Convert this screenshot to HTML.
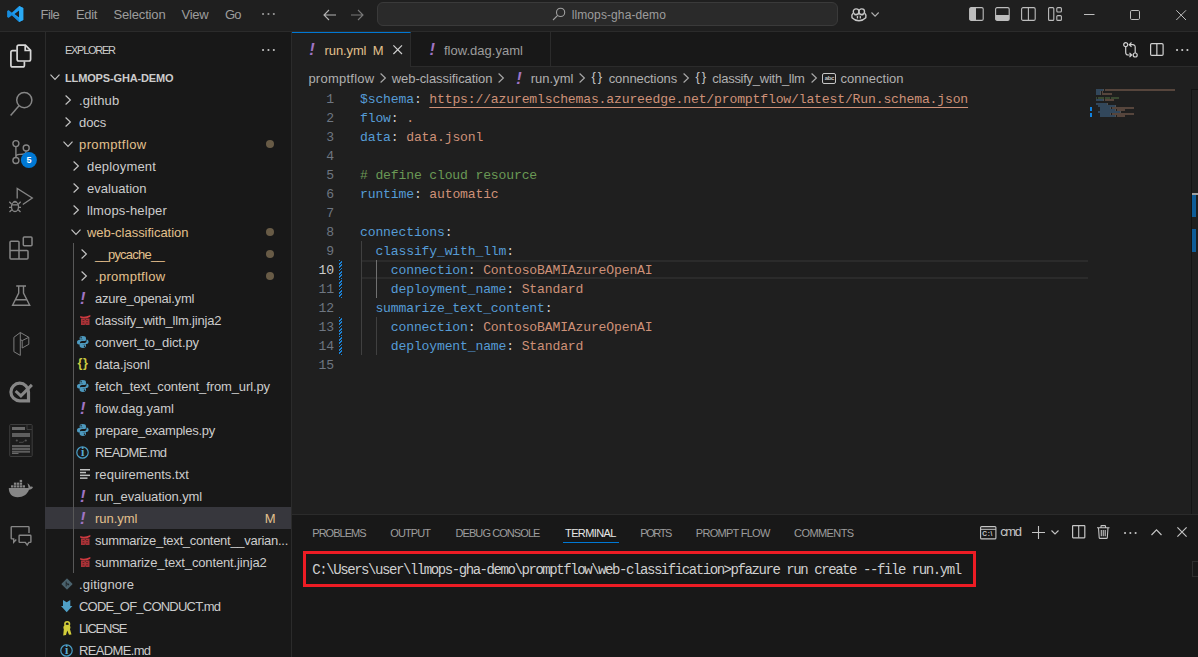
<!DOCTYPE html>
<html lang="en">
<head>
<meta charset="utf-8">
<title>run.yml - llmops-gha-demo - Visual Studio Code</title>
<style>
*{box-sizing:border-box;margin:0;padding:0}
html,body{width:1198px;height:657px;overflow:hidden;background:#181818}
body{font-family:"Liberation Sans",sans-serif;font-size:13px;color:#ccc;position:relative}
.abs{position:absolute}
svg{display:block;overflow:visible;position:absolute}
span{white-space:pre}
#title{left:0;top:0;width:1198px;height:32px;background:#1f1f1f;border-bottom:1px solid #2b2b2b}
#title span{position:absolute;top:0;height:31px;line-height:30px;color:#9d9d9d}
#cc{left:377px;top:2px;width:461px;height:24px;border:1px solid #3a3a3a;border-radius:6px;background:#2a2a2a}
#act{left:0;top:32px;width:46px;height:625px;background:#181818;border-right:1px solid #2b2b2b}
#side{left:46px;top:32px;width:246px;height:625px;background:#181818;border-right:1px solid #2b2b2b}
.row{position:absolute;left:0;width:245px;height:22px}
.row span{position:absolute;top:0;height:22px;line-height:23px}
.row.sel{background:#37373d;left:-1px;width:246px}.row.sel span{margin-left:1px}
.dot{position:absolute;left:219.5px;top:7px;width:8px;height:8px;border-radius:50%;background:#e2c08d;opacity:.4}
#tabs{left:292px;top:32px;width:906px;height:35px;background:#181818;border-bottom:1px solid #2b2b2b}
.tab{position:absolute;top:0;height:35px;border-right:1px solid #2b2b2b}
.tab span{position:absolute;top:0;height:35px;line-height:37px}
#crumbs{left:292px;top:67px;width:906px;height:22px;background:#1f1f1f}
#crumbs span{position:absolute;top:0;height:22px;line-height:23px;color:#b0b0b0}
#editor{left:292px;top:89px;width:906px;height:425px;background:#1f1f1f;overflow:hidden}
.ln{position:absolute;left:0;width:42px;height:19px;line-height:21px;text-align:right;font-family:"Liberation Mono",monospace;font-size:13.1px;letter-spacing:-.161px;color:#6e7681}
.cl{position:absolute;left:68px;height:19px;line-height:21px;font-family:"Liberation Mono",monospace;font-size:13.1px;letter-spacing:-.161px;color:#ccc}
.k{color:#569cd6}.s{color:#ce9178}.c{color:#6a9955}.u{text-decoration:underline;text-underline-offset:3.5px;text-decoration-thickness:1px}
.ig{position:absolute;width:1px;background:#404040}
.dg{position:absolute;left:47px;width:3px;height:19px;background:repeating-linear-gradient(135deg,#1b81d4 0 1.2px,#1f1f1f 1.2px 2.4px)}
#panel{left:292px;top:514px;width:906px;height:143px;background:#181818;border-top:1px solid #2b2b2b}
#panel span{position:absolute}
.pt{top:8px;height:22px;line-height:21px;font-size:11px;color:#9d9d9d}
</style>
</head>
<body>
<div id="title" class="abs"><svg style="left:7px;top:6px" width="16.5" height="16" viewBox="0 0 16 16" ><path d="M11.9 0.1 L16 2 V14 L11.9 15.9 L4.6 9.3 L1.4 11.8 L0 11.1 V4.9 L1.4 4.2 L4.6 6.7 Z M11.9 4.4 L7.2 8 L11.9 11.6 Z" fill="#1f9cf0" fill-rule="evenodd"/><path d="M11.9 0.1 L16 2 V14 L11.9 15.9 Z" fill="#2aaaf5"/><path d="M0 4.9 L1.4 4.2 L11.9 13.2 V15.9 L4.6 9.3 L1.4 11.8 L0 11.1 Z" fill="#0f7fd0" opacity=".55"/></svg><span style="left:40.6px;letter-spacing:-0.563px;">File</span><span style="left:75.9px;letter-spacing:-0.327px;">Edit</span><span style="left:113.4px;letter-spacing:-0.154px;">Selection</span><span style="left:181.5px;letter-spacing:-0.238px;">View</span><span style="left:225.0px;letter-spacing:-0.772px;">Go</span><svg style="left:261.85px;top:13.45px" width="12.9" height="2.1" viewBox="0 0 12.9 2.1" ><circle cx="1.05" cy="1.05" r="1.05" fill="#9d9d9d"/><circle cx="6.45" cy="1.05" r="1.05" fill="#9d9d9d"/><circle cx="11.850000000000001" cy="1.05" r="1.05" fill="#9d9d9d"/></svg><svg style="left:323px;top:9px" width="14" height="12" viewBox="0 0 14 12" ><path d="M13 6H1.2M6 1L1 6l5 5" fill="none" stroke="#b4b4b4" stroke-width="1.1"/></svg><svg style="left:349.5px;top:9px" width="14" height="12" viewBox="0 0 14 12" ><path d="M1 6h11.8M8 1l5 5-5 5" fill="none" stroke="#7a7a7a" stroke-width="1.1"/></svg><div id="cc" class="abs"></div><svg style="left:552px;top:7px" width="14" height="14" viewBox="0 0 14 14" ><circle cx="8.6" cy="5.4" r="4.1" fill="none" stroke="#a0a0a0" stroke-width="1.1"/><path d="M5.7 8.3L1 13" stroke="#a0a0a0" stroke-width="1.1"/></svg><span style="left:571.7px;font-size:12px;letter-spacing:0.105px;line-height:31px;">llmops-gha-demo</span><svg style="left:850.5px;top:8px" width="16" height="14" viewBox="0 0 16 14" ><rect x="2.300" y=".9" width="5.600" height="5.600" rx="2.700" fill="none" stroke="#c8c8c8" stroke-width="1.4"/><rect x="7.900" y=".9" width="5.600" height="5.600" rx="2.700" fill="none" stroke="#c8c8c8" stroke-width="1.4"/><path d="M2 5.300Q.3 6.800 1 9.700Q4 12.700 7.900 12.700Q11.800 12.700 14.800 9.700Q15.500 6.800 13.800 5.300" fill="none" stroke="#c8c8c8" stroke-width="1.4"/><rect x="5.800" y="8" width="1.300" height="2.400" rx=".5" fill="#c8c8c8"/><rect x="8.700" y="8" width="1.300" height="2.400" rx=".5" fill="#c8c8c8"/><path d="M3.500 7.200Q7.900 6.200 12.300 7.200" fill="none" stroke="#c8c8c8" stroke-width=".9" opacity=".7"/></svg><svg style="left:870.8px;top:11.7px" width="9" height="5" viewBox="0 0 9 5" ><path d="M.5.5L4.100 4.100L7.700.5" fill="none" stroke="#b0b0b0" stroke-width="1.1"/></svg><svg style="left:969px;top:7px" width="15" height="14" viewBox="0 0 15 14" ><rect x=".6" y=".6" width="13.6" height="12.8" rx="1.5" fill="none" stroke="#bdbdbd" stroke-width="1.1"/><path d="M1 1h6v12H1z" fill="#bdbdbd"/></svg><svg style="left:995px;top:7px" width="15" height="14" viewBox="0 0 15 14" ><rect x=".6" y=".6" width="13.6" height="12.8" rx="1.5" fill="none" stroke="#bdbdbd" stroke-width="1.1"/><path d="M1 8h13v5H1z" fill="#bdbdbd"/></svg><svg style="left:1021px;top:7px" width="15" height="14" viewBox="0 0 15 14" ><rect x=".6" y=".6" width="13.6" height="12.8" rx="1.5" fill="none" stroke="#bdbdbd" stroke-width="1.1"/><path d="M7.400 1v12" stroke="#bdbdbd" stroke-width="1.1"/></svg><svg style="left:1047.5px;top:7px" width="14" height="14" viewBox="0 0 14 14" ><rect x=".6" y=".6" width="5.200" height="12.800" rx="1" fill="none" stroke="#bdbdbd" stroke-width="1.1"/><rect x="8.800" y=".6" width="4.600" height="4.400" rx="1" fill="none" stroke="#bdbdbd" stroke-width="1.1"/><rect x="8.800" y="8.600" width="4.600" height="4.800" rx="1" fill="none" stroke="#bdbdbd" stroke-width="1.1"/></svg><svg style="left:1083.5px;top:14px" width="11" height="1" viewBox="0 0 11 1" ><rect width="10.5" height="1" fill="#bdbdbd"/></svg><svg style="left:1130px;top:9.5px" width="10" height="10" viewBox="0 0 10 10" ><rect x=".5" y=".5" width="9" height="9" rx="1.2" fill="none" stroke="#bdbdbd" stroke-width="1"/></svg><svg style="left:1176px;top:9.5px" width="10" height="10" viewBox="0 0 10 10" ><path d="M.3.3l9.700 9.700M10 .3L.3 10" stroke="#bdbdbd" stroke-width="1"/></svg></div>
<div id="act" class="abs"><svg style="left:0;top:0" width="46" height="625" viewBox="0 32 46 625"><g fill="none" stroke="#d7d7d7" stroke-width="1.7"><path d="M16.6 50.600H12.600Q10.900 50.600 10.900 52.300V65.200Q10.900 66.900 12.600 66.900H22.700Q24.400 66.900 24.400 65.200V61.600"/><path d="M18.800 45.100H25.400L30.600 50.300V59.300Q30.600 61 28.900 61H18.800Q17.100 61 17.100 59.300V46.800Q17.100 45.100 18.800 45.100Z"/><path d="M25.200 45.300V50.500H30.400"/></g><g fill="none" stroke="#868686" stroke-width="1.5"><circle cx="24.3" cy="100.1" r="7.6"/><path d="M19 105.800L10.600 115.500"/></g><g fill="none" stroke="#868686" stroke-width="1.4"><circle cx="15.9" cy="143.6" r="3"/><circle cx="26.2" cy="148" r="3"/><circle cx="15.9" cy="160.5" r="3"/><path d="M15.900 146.700V157.400M26.200 151.100C26.200 154.600 23 154.400 19.500 154.400 17.200 154.400 15.900 155.400 15.900 157.400"/></g><circle cx="28.9" cy="160" r="8" fill="#0078d4"/><g fill="none" stroke="#868686" stroke-width="1.3"><path d="M17.200 198.500V188.500L32.300 198L22.800 204.500"/><ellipse cx="15" cy="206.700" rx="3.500" ry="4.800"/><path d="M11.700 204.800H18.300M11.500 204L9.300 201.800M18.500 204L20.700 201.800M11.400 207.300H9M18.600 207.300H21M11.800 209.800L9.500 212M18.200 209.800L20.500 212M13.500 202.300Q15 200.300 16.500 202.300"/></g><g fill="none" stroke="#868686" stroke-width="1.5"><path d="M11 241.200H18Q19 241.200 19 242.200V250.500H27Q28 250.500 28 251.500V258Q28 259 27 259H11Q10 259 10 258V242.200Q10 241.200 11 241.200ZM19 250.500V259M10 250.500H19"/><rect x="23.300" y="237" width="8.700" height="8.700" rx="1"/></g><g fill="none" stroke="#868686" stroke-width="1.4"><path d="M16.200 286H26M18.700 286V293L12.600 305.300H29.700L23.500 293V286M15.400 299.800H26.800"/></g><g fill="none" stroke="#7d7d7d" stroke-width="1"><path d="M20.300 332.500L13.900 337.300V351.700L20.300 355.400ZM20.300 332.500L28.800 337.300V344.300L22.200 348V340.600L28.800 337.300M22.200 340.600L20.300 339.600"/></g><g fill="none" stroke="#868686" stroke-width="3.2"><path d="M28.500 392A8.800 8.800 0 1 0 19.700 400.800H28.500Z"/></g><g fill="none" stroke="#868686" stroke-width="3"><path d="M15.600 391L20.900 395.900L31.900 384.900"/></g><rect x="9.700" y="424.500" width="22.500" height="32" rx="1" fill="#1c1c1c" stroke="#3d3d3d" stroke-width="1"/><path d="M27 424.500V429.500H32" fill="none" stroke="#3d3d3d"/><rect x="12" y="427" width="13" height="3" fill="#6a6a6a"/><rect x="12" y="433" width="18" height="4" fill="#5e5e5e"/><rect x="12" y="445" width="18" height="2.300" fill="#5e5e5e"/><rect x="12" y="448" width="18" height="2" fill="#5e5e5e"/><rect x="12" y="450.700" width="18" height="2" fill="#5e5e5e"/><rect x="12" y="453" width="6.500" height="1" fill="#6a6a6a"/><circle cx="16.800" cy="440.500" r="1.100" fill="#555"/><circle cx="25.800" cy="440.500" r="1.100" fill="#555"/><path d="M19 442.300H23L24.500 441" fill="none" stroke="#555" stroke-width=".8"/><path d="M8.800 488H28.500C28.300 486 28 484.500 27.300 483.200C29.300 484.300 30 485.600 30.300 486.700C31.300 486.200 32.300 486.400 33 487C32.300 488.800 30.800 489.700 29 489.700C27.300 494.300 23.300 497.200 17.600 497.200C11.800 497.200 8.800 493.500 8.800 488Z" fill="#868686"/><rect x="11" y="485.3" width="2.4" height="2.200" fill="#868686"/><rect x="13.9" y="485.3" width="2.4" height="2.200" fill="#868686"/><rect x="16.8" y="485.3" width="2.4" height="2.200" fill="#868686"/><rect x="19.7" y="485.3" width="2.4" height="2.200" fill="#868686"/><rect x="22.6" y="485.3" width="2.4" height="2.200" fill="#868686"/><rect x="13.9" y="482.6" width="2.4" height="2.200" fill="#868686"/><rect x="16.8" y="482.6" width="2.4" height="2.200" fill="#868686"/><rect x="19.7" y="482.6" width="2.4" height="2.200" fill="#868686"/><rect x="19.7" y="479.9" width="2.4" height="2.200" fill="#868686"/><g fill="none" stroke="#868686" stroke-width="1.4"><path d="M29 533V527.300Q29 526.600 28.300 526.600H11.900Q11.200 526.600 11.200 527.300V538.200Q11.200 538.900 11.900 538.900H13.700V542.200L16.300 539.500"/><path d="M19.800 535.300H30.200Q30.900 535.300 30.900 536V541.700Q30.900 542.400 30.200 542.400H28.900L27.200 545L25.300 542.400H19.800Q19.100 542.400 19.100 541.700V536Q19.100 535.300 19.800 535.300Z"/></g></svg><span style="left:26.4px;font-size:9px;font-weight:700;color:#fff;position:absolute;top:122.5px;line-height:11px;">5</span></div>
<div id="side" class="abs"><div class="row" style="top:6px"><span style="left:19.0px;font-size:11px;letter-spacing:-1.278px;line-height:24px;">EXPLORER</span></div><svg style="left:215.85px;top:16.95px" width="12.9" height="2.1" viewBox="0 0 12.9 2.1" ><circle cx="1.05" cy="1.05" r="1.05" fill="#c5c5c5"/><circle cx="6.45" cy="1.05" r="1.05" fill="#c5c5c5"/><circle cx="11.850000000000001" cy="1.05" r="1.05" fill="#c5c5c5"/></svg><div class="row" style="top:35px"><svg style="left:4.299999999999997px;top:7.4px" width="10" height="6" viewBox="0 0 10 6" ><path d="M.5.6L5 5.400L9.500.6" fill="none" stroke="#c5c5c5" stroke-width="1.15"/></svg><span style="left:19.0px;font-size:11px;font-weight:700;letter-spacing:-0.141px;line-height:23px;">LLMOPS-GHA-DEMO</span></div><div class="row" style="top:57px"><svg style="left:19.299999999999997px;top:6px" width="6" height="10" viewBox="0 0 6 10" ><path d="M.6.5L5.400 5L.6 9.500" fill="none" stroke="#c5c5c5" stroke-width="1.15"/></svg><span style="left:33.0px;letter-spacing:0.208px;">.github</span></div><div class="row" style="top:79px"><svg style="left:19.299999999999997px;top:6px" width="6" height="10" viewBox="0 0 6 10" ><path d="M.6.5L5.400 5L.6 9.500" fill="none" stroke="#c5c5c5" stroke-width="1.15"/></svg><span style="left:33.0px;letter-spacing:-0.092px;">docs</span></div><div class="row" style="top:101px"><svg style="left:17.200000000000003px;top:8.3px" width="10" height="6" viewBox="0 0 10 6" ><path d="M.5.6L5 5.400L9.500.6" fill="none" stroke="#c5c5c5" stroke-width="1.15"/></svg><span style="left:33.0px;color:#e2c08d;letter-spacing:0.402px;">promptflow</span><i class="dot"></i></div><div class="row" style="top:123px"><svg style="left:27.299999999999997px;top:6px" width="6" height="10" viewBox="0 0 6 10" ><path d="M.6.5L5.400 5L.6 9.500" fill="none" stroke="#c5c5c5" stroke-width="1.15"/></svg><span style="left:41.0px;letter-spacing:0.178px;">deployment</span></div><div class="row" style="top:145px"><svg style="left:27.299999999999997px;top:6px" width="6" height="10" viewBox="0 0 6 10" ><path d="M.6.5L5.400 5L.6 9.500" fill="none" stroke="#c5c5c5" stroke-width="1.15"/></svg><span style="left:41.0px;letter-spacing:0.032px;">evaluation</span></div><div class="row" style="top:167px"><svg style="left:27.299999999999997px;top:6px" width="6" height="10" viewBox="0 0 6 10" ><path d="M.6.5L5.400 5L.6 9.500" fill="none" stroke="#c5c5c5" stroke-width="1.15"/></svg><span style="left:41.0px;letter-spacing:0.150px;">llmops-helper</span></div><div class="row" style="top:189px"><svg style="left:25.200000000000003px;top:8.3px" width="10" height="6" viewBox="0 0 10 6" ><path d="M.5.6L5 5.400L9.500.6" fill="none" stroke="#c5c5c5" stroke-width="1.15"/></svg><span style="left:41.0px;color:#e2c08d;letter-spacing:-0.021px;">web-classification</span><i class="dot"></i></div><div class="row" style="top:211px"><svg style="left:35.3px;top:6px" width="6" height="10" viewBox="0 0 6 10" ><path d="M.6.5L5.400 5L.6 9.500" fill="none" stroke="#c5c5c5" stroke-width="1.15"/></svg><span style="left:49.0px;color:#e2c08d;letter-spacing:-0.768px;">__pycache__</span><i class="dot"></i></div><div class="row" style="top:233px"><svg style="left:35.3px;top:6px" width="6" height="10" viewBox="0 0 6 10" ><path d="M.6.5L5.400 5L.6 9.500" fill="none" stroke="#c5c5c5" stroke-width="1.15"/></svg><span style="left:49.0px;color:#e2c08d;letter-spacing:0.291px;">.promptflow</span><i class="dot"></i></div><div class="row" style="top:255px"><span style="left:33.9px;font-size:16.5px;font-weight:700;font-style:italic;color:#a074c4;line-height:23px;">!</span><span style="left:49.0px;letter-spacing:-0.214px;">azure_openai.yml</span></div><div class="row" style="top:277px"><svg style="left:34px;top:6px" width="10.6" height="10" viewBox="0 0 10.6 10" ><path d="M.2 1.100Q4.800 2.700 10.400 0L10.300 1.700Q7 3.600 5.200 3.500Q2.500 3.500 .2 2.800Z" fill="#d03a40"/><rect x="1" y="3.500" width="8.500" height="6.500" fill="#d03a40" opacity=".8"/><path d="M2.600 5.300H4.300V6H2.600ZM6.200 5.300H7.900V6H6.200ZM2.600 7.500H4.300V8.200H2.600ZM6.200 7.500H7.900V8.200H6.200ZM4.900 3.500H5.600V5H4.900ZM4.900 8.800H5.600V10H4.900Z" fill="#181818" opacity=".7"/></svg><span style="left:49.0px;letter-spacing:-0.187px;">classify_with_llm.jinja2</span></div><div class="row" style="top:299px"><svg style="left:31px;top:4.9px" width="11.6" height="12" viewBox="0 0 11.6 12" ><path d="M5.700 0C3.600 0 2.600.9 2.600 2.200V3.700H5.900V4.100H1.900C.7 4.100 0 5.100 0 6.300 0 7.600.7 8.600 1.900 8.600H3V6.900C3 5.800 3.900 5.100 5 5.100H7.400C8.400 5.100 9 4.400 9 3.500V2.200C9 .9 8 0 5.700 0ZM4.100 1A.7.7 0 1 1 4.100 2.400A.7.7 0 1 1 4.100 1Z" fill="#4d99be" fill-rule="evenodd"/><path d="M5.900 12C8 12 9 11.100 9 9.800V8.300H5.700V7.900H9.700C10.900 7.900 11.600 6.900 11.600 5.700 11.600 4.400 10.900 3.400 9.700 3.400H9.500V5.100C9.500 6.200 8.700 6.900 7.600 6.900H4.200C3.200 6.900 2.600 7.600 2.600 8.500V9.800C2.600 11.100 3.600 12 5.900 12ZM7.500 11A.7.7 0 1 1 7.500 9.600A.7.7 0 1 1 7.500 11Z" fill="#4d99be" fill-rule="evenodd"/></svg><span style="left:49.0px;letter-spacing:-0.084px;">convert_to_dict.py</span></div><div class="row" style="top:321px"><span style="left:31.4px;font-size:12.5px;font-weight:700;color:#cbcb41;letter-spacing:0.783px;line-height:21px;">{}</span><span style="left:49.0px;letter-spacing:-0.096px;">data.jsonl</span></div><div class="row" style="top:343px"><svg style="left:31px;top:4.9px" width="11.6" height="12" viewBox="0 0 11.6 12" ><path d="M5.700 0C3.600 0 2.600.9 2.600 2.200V3.700H5.900V4.100H1.900C.7 4.100 0 5.100 0 6.300 0 7.600.7 8.600 1.900 8.600H3V6.900C3 5.800 3.900 5.100 5 5.100H7.400C8.400 5.100 9 4.400 9 3.500V2.200C9 .9 8 0 5.700 0ZM4.100 1A.7.7 0 1 1 4.100 2.400A.7.7 0 1 1 4.100 1Z" fill="#4d99be" fill-rule="evenodd"/><path d="M5.900 12C8 12 9 11.100 9 9.800V8.300H5.700V7.900H9.700C10.900 7.900 11.600 6.900 11.600 5.700 11.600 4.400 10.900 3.400 9.700 3.400H9.500V5.100C9.500 6.200 8.700 6.900 7.600 6.900H4.200C3.200 6.900 2.600 7.600 2.600 8.500V9.800C2.600 11.100 3.600 12 5.900 12ZM7.500 11A.7.7 0 1 1 7.500 9.600A.7.7 0 1 1 7.500 11Z" fill="#4d99be" fill-rule="evenodd"/></svg><span style="left:49.0px;letter-spacing:-0.120px;">fetch_text_content_from_url.py</span></div><div class="row" style="top:365px"><span style="left:33.9px;font-size:16.5px;font-weight:700;font-style:italic;color:#a074c4;line-height:23px;">!</span><span style="left:49.0px;letter-spacing:0.010px;">flow.dag.yaml</span></div><div class="row" style="top:387px"><svg style="left:31px;top:4.9px" width="11.6" height="12" viewBox="0 0 11.6 12" ><path d="M5.700 0C3.600 0 2.600.9 2.600 2.200V3.700H5.900V4.100H1.900C.7 4.100 0 5.100 0 6.300 0 7.600.7 8.600 1.900 8.600H3V6.900C3 5.800 3.900 5.100 5 5.100H7.400C8.400 5.100 9 4.400 9 3.500V2.200C9 .9 8 0 5.700 0ZM4.100 1A.7.7 0 1 1 4.100 2.400A.7.7 0 1 1 4.100 1Z" fill="#4d99be" fill-rule="evenodd"/><path d="M5.900 12C8 12 9 11.100 9 9.800V8.300H5.700V7.900H9.700C10.900 7.900 11.600 6.900 11.600 5.700 11.600 4.400 10.900 3.400 9.700 3.400H9.500V5.100C9.500 6.200 8.700 6.900 7.600 6.900H4.200C3.200 6.900 2.600 7.600 2.600 8.500V9.800C2.600 11.100 3.600 12 5.900 12ZM7.500 11A.7.7 0 1 1 7.500 9.600A.7.7 0 1 1 7.500 11Z" fill="#4d99be" fill-rule="evenodd"/></svg><span style="left:49.0px;letter-spacing:-0.265px;">prepare_examples.py</span></div><div class="row" style="top:409px"><svg style="left:30.400000000000006px;top:4.5px" width="13" height="13" viewBox="0 0 13 13" ><circle cx="6.500" cy="6.500" r="5.700" fill="none" stroke="#4a9fc8" stroke-width="1.2"/></svg><span style="left:34.9px;font-size:12px;font-weight:700;font-family:'Liberation Serif',serif;color:#58abd4;top:4.5px;height:12px;line-height:12px;">i</span><span style="left:49.0px;letter-spacing:-0.655px;">README.md</span></div><div class="row" style="top:431px"><svg style="left:34px;top:6.3px" width="10" height="10" viewBox="0 0 10 10" ><rect x="0" y="0" width="10" height="1.500" fill="#bfc1c0"/><rect x="0" y="2.800" width="6" height="1.500" fill="#bfc1c0"/><rect x="0" y="5.600" width="10" height="1.500" fill="#bfc1c0"/><rect x="0" y="8.400" width="7.500" height="1.500" fill="#bfc1c0"/></svg><span style="left:49.0px;letter-spacing:0.044px;">requirements.txt</span></div><div class="row" style="top:453px"><span style="left:33.9px;font-size:16.5px;font-weight:700;font-style:italic;color:#a074c4;line-height:23px;">!</span><span style="left:49.0px;letter-spacing:-0.113px;">run_evaluation.yml</span></div><div class="row sel" style="top:475px"><span style="left:33.9px;font-size:16.5px;font-weight:700;font-style:italic;color:#a074c4;line-height:23px;">!</span><span style="left:49.0px;color:#e2c08d;letter-spacing:-0.032px;">run.yml</span><span style="left:218.7px;color:#e2c08d;letter-spacing:-0.444px;">M</span></div><div class="row" style="top:497px"><svg style="left:34px;top:6px" width="10.6" height="10" viewBox="0 0 10.6 10" ><path d="M.2 1.100Q4.800 2.700 10.400 0L10.300 1.700Q7 3.600 5.200 3.500Q2.500 3.500 .2 2.800Z" fill="#d03a40"/><rect x="1" y="3.500" width="8.500" height="6.500" fill="#d03a40" opacity=".8"/><path d="M2.600 5.300H4.300V6H2.600ZM6.200 5.300H7.900V6H6.200ZM2.600 7.500H4.300V8.200H2.600ZM6.200 7.500H7.900V8.200H6.200ZM4.900 3.500H5.600V5H4.900ZM4.900 8.800H5.600V10H4.900Z" fill="#181818" opacity=".7"/></svg><span style="left:49.0px;letter-spacing:-0.283px;">summarize_text_content__varian...</span></div><div class="row" style="top:519px"><svg style="left:34px;top:6px" width="10.6" height="10" viewBox="0 0 10.6 10" ><path d="M.2 1.100Q4.800 2.700 10.400 0L10.300 1.700Q7 3.600 5.200 3.500Q2.500 3.500 .2 2.800Z" fill="#d03a40"/><rect x="1" y="3.500" width="8.500" height="6.500" fill="#d03a40" opacity=".8"/><path d="M2.600 5.300H4.300V6H2.600ZM6.200 5.300H7.900V6H6.200ZM2.600 7.500H4.300V8.200H2.600ZM6.200 7.500H7.900V8.200H6.200ZM4.900 3.500H5.600V5H4.900ZM4.900 8.800H5.600V10H4.900Z" fill="#181818" opacity=".7"/></svg><span style="left:49.0px;letter-spacing:-0.138px;">summarize_text_content.jinja2</span></div><div class="row" style="top:541px"><svg style="left:14.700000000000003px;top:4.9px" width="12" height="12" viewBox="0 0 12 12" ><rect x="2" y="2" width="8" height="8" rx=".6" transform="rotate(45 6 6)" fill="#4a626d"/><path d="M5.200 3.600V8.400M5.200 5.300L7.400 6.500" stroke="#20282c" stroke-width="1" fill="none"/><circle cx="7.300" cy="6.400" r=".9" fill="#20282c"/></svg><span style="left:33.0px;letter-spacing:0.162px;">.gitignore</span></div><div class="row" style="top:563px"><svg style="left:15px;top:4.8px" width="11.4" height="12.3" viewBox="0 0 11.4 12.3" ><path d="M2 0L5.700 2.200L9.300 0V6H11.400L5.700 12.300L0 6H2Z" fill="#4f9fc6"/></svg><span style="left:33.0px;letter-spacing:-0.783px;">CODE_OF_CONDUCT.md</span></div><div class="row" style="top:585px"><svg style="left:16.799999999999997px;top:3.5px" width="8.6" height="14.6" viewBox="0 0 8.6 14.6" ><circle cx="4.200" cy="3.100" r="2.300" fill="none" stroke="#d2cd3a" stroke-width="1.600"/><ellipse cx="3.900" cy="6.400" rx="3.500" ry="2.600" fill="#d2cd3a"/><path d="M1 6.500L.2 14.400L3 14L4.300 9.500L6 13.800L8.500 13.500L6.500 6.500Z" fill="#d2cd3a"/></svg><span style="left:33.0px;letter-spacing:-1.220px;">LICENSE</span></div><div class="row" style="top:607px"><svg style="left:14.400000000000006px;top:4.5px" width="13" height="13" viewBox="0 0 13 13" ><circle cx="6.500" cy="6.500" r="5.700" fill="none" stroke="#4a9fc8" stroke-width="1.2"/></svg><span style="left:18.9px;font-size:12px;font-weight:700;font-family:'Liberation Serif',serif;color:#58abd4;top:4.5px;height:12px;line-height:12px;">i</span><span style="left:33.0px;letter-spacing:-0.655px;">README.md</span></div><div class="abs" style="left:27px;top:211px;width:1px;height:330px;background:#585858"></div></div>
<div id="tabs" class="abs"><div class="tab" style="left:0;width:119px;background:#1f1f1f;border-top:1px solid #0078d4;height:35px"><span style="left:17.3px;font-size:16.5px;font-weight:700;font-style:italic;color:#a074c4;top:-1px;line-height:35.5px;">!</span><span style="left:32.6px;color:#e2c08d;letter-spacing:-0.118px;top:-1px;">run.yml</span><span style="left:80.7px;color:#e2c08d;letter-spacing:-0.344px;top:-1px;">M</span><svg style="left:100.80000000000001px;top:12.299999999999997px" width="9.4" height="9.4" viewBox="0 0 9.4 9.4" ><path d="M.4.4l8.600 8.600M9 .4L.4 9" stroke="#d0d0d0" stroke-width="1.15"/></svg></div><div class="tab" style="left:119px;width:140px;height:34px"><span style="left:18.6px;font-size:16.5px;font-weight:700;font-style:italic;color:#a074c4;line-height:35.5px;">!</span><span style="left:33.0px;color:#9d9d9d;letter-spacing:0.010px;">flow.dag.yaml</span></div><svg style="left:830.5px;top:10.399999999999999px" width="15" height="16" viewBox="0 0 15 16" ><circle cx="2.700" cy="2.700" r="2" fill="none" stroke="#d0d0d0" stroke-width="1.2"/><circle cx="12.200" cy="13" r="2" fill="none" stroke="#d0d0d0" stroke-width="1.2"/><path d="M2.700 4.800V10.500Q2.700 13 5.200 13H8.500M6.500 10.800L8.700 13L6.500 15.200M12.200 11V5.200Q12.200 2.700 9.700 2.700H6.500M8.500 .5L6.300 2.700L8.500 4.900" fill="none" stroke="#d0d0d0" stroke-width="1.2"/></svg><svg style="left:857.7px;top:10.899999999999999px" width="14" height="13" viewBox="0 0 14 13" ><rect x=".6" y=".6" width="12.500" height="11.800" rx="1.200" fill="none" stroke="#d0d0d0" stroke-width="1.2"/><path d="M6.850 .6V12.400" stroke="#d0d0d0" stroke-width="1.2"/></svg><svg style="left:883.8499999999999px;top:16.749999999999996px" width="12.5" height="2.1" viewBox="0 0 12.5 2.1" ><circle cx="1.05" cy="1.05" r="1.05" fill="#d0d0d0"/><circle cx="6.25" cy="1.05" r="1.05" fill="#d0d0d0"/><circle cx="11.450000000000001" cy="1.05" r="1.05" fill="#d0d0d0"/></svg></div>
<div id="crumbs" class="abs"><span style="left:16.4px;letter-spacing:0.252px;">promptflow</span><svg style="left:88.30000000000001px;top:6.3px" width="6" height="10" viewBox="0 0 6 10" ><path d="M.6.5L5.400 5L.6 9.500" fill="none" stroke="#a9a9a9" stroke-width="1.15"/></svg><span style="left:99.8px;letter-spacing:-0.071px;">web-classification</span><svg style="left:206.3px;top:6.3px" width="6" height="10" viewBox="0 0 6 10" ><path d="M.6.5L5.400 5L.6 9.500" fill="none" stroke="#a9a9a9" stroke-width="1.15"/></svg><span style="left:224.2px;font-size:16.5px;font-weight:700;font-style:italic;color:#a074c4;">!</span><span style="left:238.8px;letter-spacing:-0.004px;">run.yml</span><svg style="left:286.5px;top:6.3px" width="6" height="10" viewBox="0 0 6 10" ><path d="M.6.5L5.400 5L.6 9.500" fill="none" stroke="#a9a9a9" stroke-width="1.15"/></svg><span style="left:299.5px;color:#c5c5c5;letter-spacing:1.956px;line-height:20px;">{}</span><span style="left:316.7px;letter-spacing:-0.090px;">connections</span><svg style="left:390.9px;top:6.3px" width="6" height="10" viewBox="0 0 6 10" ><path d="M.6.5L5.400 5L.6 9.500" fill="none" stroke="#a9a9a9" stroke-width="1.15"/></svg><span style="left:403.5px;color:#c5c5c5;letter-spacing:1.906px;line-height:20px;">{}</span><span style="left:420.3px;letter-spacing:-0.260px;">classify_with_llm</span><svg style="left:518.5px;top:6.3px" width="6" height="10" viewBox="0 0 6 10" ><path d="M.6.5L5.400 5L.6 9.500" fill="none" stroke="#a9a9a9" stroke-width="1.15"/></svg><svg style="left:530.2px;top:5.5px" width="14" height="11" viewBox="0 0 14 11" ><rect x=".5" y=".5" width="13" height="10" rx="1.500" fill="none" stroke="#c5c5c5" stroke-width="1"/></svg><span style="left:532.8px;font-size:6px;font-weight:700;color:#c5c5c5;letter-spacing:-0.381px;top:5.500px;height:11px;line-height:10px;">abc</span><span style="left:548.6px;letter-spacing:0.001px;">connection</span></div>
<div id="editor" class="abs"><div class="abs" style="left:69px;top:171px;width:727px;height:19px;border-top:2px solid #2b2b2b;border-bottom:2px solid #2b2b2b"></div><i class="ig" style="left:69px;top:152px;height:114px"></i><i class="ig" style="left:84px;top:171px;height:38px;background:#707070"></i><i class="ig" style="left:84px;top:228px;height:38px"></i><i class="dg" style="top:171px"></i><i class="dg" style="top:190px"></i><i class="dg" style="top:228px"></i><i class="dg" style="top:247px"></i><div class="ln" style="top:0px">1</div><div class="cl" style="top:0px;white-space:pre"><span class="k">$schema</span>: <span class="s u">https://azuremlschemas.azureedge.net/promptflow/latest/Run.schema.json</span></div><div class="ln" style="top:19px">2</div><div class="cl" style="top:19px;white-space:pre"><span class="k">flow</span>: <span class="s">.</span></div><div class="ln" style="top:38px">3</div><div class="cl" style="top:38px;white-space:pre"><span class="k">data</span>: <span class="s">data.jsonl</span></div><div class="ln" style="top:57px">4</div><div class="ln" style="top:76px">5</div><div class="cl" style="top:76px;white-space:pre"><span class="c"># define cloud resource</span></div><div class="ln" style="top:95px">6</div><div class="cl" style="top:95px;white-space:pre"><span class="k">runtime</span>: <span class="s">automatic</span></div><div class="ln" style="top:114px">7</div><div class="ln" style="top:133px">8</div><div class="cl" style="top:133px;white-space:pre"><span class="k">connections</span>:</div><div class="ln" style="top:152px">9</div><div class="cl" style="top:152px;white-space:pre">  <span class="k">classify_with_llm</span>:</div><div class="ln" style="top:171px;color:#ccc">10</div><div class="cl" style="top:171px;white-space:pre">    <span class="k">connection</span>: <span class="s">ContosoBAMIAzureOpenAI</span></div><div class="ln" style="top:190px">11</div><div class="cl" style="top:190px;white-space:pre">    <span class="k">deployment_name</span>: <span class="s">Standard</span></div><div class="ln" style="top:209px">12</div><div class="cl" style="top:209px;white-space:pre">  <span class="k">summarize_text_content</span>:</div><div class="ln" style="top:228px">13</div><div class="cl" style="top:228px;white-space:pre">    <span class="k">connection</span>: <span class="s">ContosoBAMIAzureOpenAI</span></div><div class="ln" style="top:247px">14</div><div class="cl" style="top:247px;white-space:pre">    <span class="k">deployment_name</span>: <span class="s">Standard</span></div><div class="ln" style="top:266px">15</div><svg style="left:804px;top:0px" width="80" height="32" viewBox="0 0 80 32" ><path d="M0 1h7" stroke="#5a94cc" stroke-width="1.500" stroke-dasharray=".75 .25" opacity=".62"/><path d="M7 1h1" stroke="#b0b0b0" stroke-width="1.500" stroke-dasharray=".75 .25" opacity=".62"/><path d="M9 1h70" stroke="#c08f76" stroke-width="1.500" stroke-dasharray=".75 .25" opacity=".62"/><path d="M0 3h4" stroke="#5a94cc" stroke-width="1.500" stroke-dasharray=".75 .25" opacity=".62"/><path d="M4 3h1" stroke="#b0b0b0" stroke-width="1.500" stroke-dasharray=".75 .25" opacity=".62"/><path d="M6 3h1" stroke="#c08f76" stroke-width="1.500" stroke-dasharray=".75 .25" opacity=".62"/><path d="M0 5h4" stroke="#5a94cc" stroke-width="1.500" stroke-dasharray=".75 .25" opacity=".62"/><path d="M4 5h1" stroke="#b0b0b0" stroke-width="1.500" stroke-dasharray=".75 .25" opacity=".62"/><path d="M6 5h10" stroke="#c08f76" stroke-width="1.500" stroke-dasharray=".75 .25" opacity=".62"/><path d="M0 9h1" stroke="#6a9955" stroke-width="1.500" stroke-dasharray=".75 .25" opacity=".62"/><path d="M2 9h6" stroke="#6a9955" stroke-width="1.500" stroke-dasharray=".75 .25" opacity=".62"/><path d="M9 9h5" stroke="#6a9955" stroke-width="1.500" stroke-dasharray=".75 .25" opacity=".62"/><path d="M15 9h8" stroke="#6a9955" stroke-width="1.500" stroke-dasharray=".75 .25" opacity=".62"/><path d="M0 11h7" stroke="#5a94cc" stroke-width="1.500" stroke-dasharray=".75 .25" opacity=".62"/><path d="M7 11h1" stroke="#b0b0b0" stroke-width="1.500" stroke-dasharray=".75 .25" opacity=".62"/><path d="M9 11h9" stroke="#c08f76" stroke-width="1.500" stroke-dasharray=".75 .25" opacity=".62"/><path d="M0 15h11" stroke="#5a94cc" stroke-width="1.500" stroke-dasharray=".75 .25" opacity=".62"/><path d="M11 15h1" stroke="#b0b0b0" stroke-width="1.500" stroke-dasharray=".75 .25" opacity=".62"/><path d="M2 17h17" stroke="#5a94cc" stroke-width="1.500" stroke-dasharray=".75 .25" opacity=".62"/><path d="M19 17h1" stroke="#b0b0b0" stroke-width="1.500" stroke-dasharray=".75 .25" opacity=".62"/><path d="M4 19h10" stroke="#5a94cc" stroke-width="1.500" stroke-dasharray=".75 .25" opacity=".62"/><path d="M14 19h1" stroke="#b0b0b0" stroke-width="1.500" stroke-dasharray=".75 .25" opacity=".62"/><path d="M16 19h22" stroke="#c08f76" stroke-width="1.500" stroke-dasharray=".75 .25" opacity=".62"/><path d="M4 21h15" stroke="#5a94cc" stroke-width="1.500" stroke-dasharray=".75 .25" opacity=".62"/><path d="M19 21h1" stroke="#b0b0b0" stroke-width="1.500" stroke-dasharray=".75 .25" opacity=".62"/><path d="M21 21h8" stroke="#c08f76" stroke-width="1.500" stroke-dasharray=".75 .25" opacity=".62"/><path d="M2 23h22" stroke="#5a94cc" stroke-width="1.500" stroke-dasharray=".75 .25" opacity=".62"/><path d="M24 23h1" stroke="#b0b0b0" stroke-width="1.500" stroke-dasharray=".75 .25" opacity=".62"/><path d="M4 25h10" stroke="#5a94cc" stroke-width="1.500" stroke-dasharray=".75 .25" opacity=".62"/><path d="M14 25h1" stroke="#b0b0b0" stroke-width="1.500" stroke-dasharray=".75 .25" opacity=".62"/><path d="M16 25h22" stroke="#c08f76" stroke-width="1.500" stroke-dasharray=".75 .25" opacity=".62"/><path d="M4 27h15" stroke="#5a94cc" stroke-width="1.500" stroke-dasharray=".75 .25" opacity=".62"/><path d="M19 27h1" stroke="#b0b0b0" stroke-width="1.500" stroke-dasharray=".75 .25" opacity=".62"/><path d="M21 27h8" stroke="#c08f76" stroke-width="1.500" stroke-dasharray=".75 .25" opacity=".62"/></svg><div class="abs" style="left:798px;top:18px;width:2px;height:4px;background:#1183e0"></div><div class="abs" style="left:798px;top:24px;width:2px;height:4px;background:#1183e0"></div><div class="abs" style="left:899px;top:0;width:7px;height:425px;border-left:1px solid #131313;border-top:1px solid #131313"></div><div class="abs" style="left:900px;top:104px;width:4px;height:24px;background:#0f5c98"></div><div class="abs" style="left:900px;top:140px;width:4px;height:23px;background:#0f5c98"></div><div class="abs" style="left:900px;top:104px;width:6px;height:2px;background:#a0a0a0"></div></div>
<div id="panel" class="abs"><span class="pt" style="left:20.3px;font-size:11px;letter-spacing:-0.980px;">PROBLEMS</span><span class="pt" style="left:98.3px;font-size:11px;letter-spacing:-0.922px;">OUTPUT</span><span class="pt" style="left:163.5px;font-size:11px;letter-spacing:-0.921px;">DEBUG CONSOLE</span><span class="pt" style="left:273.0px;font-size:11px;color:#e7e7e7;letter-spacing:-0.591px;">TERMINAL</span><span class="pt" style="left:348.3px;font-size:11px;letter-spacing:-1.421px;">PORTS</span><span class="pt" style="left:403.8px;font-size:11px;letter-spacing:-0.718px;">PROMPT FLOW</span><span class="pt" style="left:502.1px;font-size:11px;letter-spacing:-0.584px;">COMMENTS</span><div class="abs" style="left:270.5px;top:26.5px;width:56px;height:1px;background:#0078d4"></div><svg style="left:687.5px;top:10.600000000000023px" width="16.5" height="13.5" viewBox="0 0 16.5 13.5" ><rect x=".6" y=".6" width="15.300" height="12.300" rx="1" fill="none" stroke="#c5c5c5" stroke-width="1.1"/><path d="M.6 3.300H15.900" stroke="#c5c5c5" stroke-width="1"/></svg><span style="left:690.3px;font-size:6.5px;font-weight:700;color:#c5c5c5;letter-spacing:0.676px;top:15px;line-height:8px;">C:\</span><span style="left:708.3px;color:#c5c5c5;letter-spacing:-1.487px;top:6px;line-height:21px;">cmd</span><svg style="left:740px;top:10.5px" width="13" height="13" viewBox="0 0 13 13" ><path d="M6.500 0V13M0 6.500H13" stroke="#c5c5c5" stroke-width="1.1"/></svg><svg style="left:758.5999999999999px;top:14.700000000000045px" width="8" height="5" viewBox="0 0 8 5" ><path d="M.5.5L4 4L7.500.5" fill="none" stroke="#c5c5c5" stroke-width="1.1"/></svg><svg style="left:779.8px;top:10px" width="13.5" height="13.5" viewBox="0 0 13.5 13.5" ><rect x=".6" y=".6" width="12.200" height="12.200" rx=".5" fill="none" stroke="#c5c5c5" stroke-width="1.2"/><path d="M6.700 .6V12.800" stroke="#c5c5c5" stroke-width="1.1"/></svg><svg style="left:805.3px;top:10px" width="12.5" height="14" viewBox="0 0 12.5 14" ><path d="M0 2.800H12.500M4 2.800V1.200Q4 .6 4.600 .6H7.900Q8.500 .6 8.500 1.200V2.800M1.500 2.800L2.200 12.600Q2.300 13.400 3.100 13.400H9.400Q10.200 13.400 10.300 12.600L11 2.800M4.300 5V11.200M6.250 5V11.200M8.200 5V11.200" fill="none" stroke="#c5c5c5" stroke-width="1.1"/></svg><svg style="left:831.8500000000001px;top:16.550000000000022px" width="12.7" height="2.1" viewBox="0 0 12.7 2.1" ><circle cx="1.05" cy="1.05" r="1.05" fill="#c5c5c5"/><circle cx="6.35" cy="1.05" r="1.05" fill="#c5c5c5"/><circle cx="11.65" cy="1.05" r="1.05" fill="#c5c5c5"/></svg><svg style="left:858.5px;top:13.5px" width="11" height="6.5" viewBox="0 0 11 6.5" ><path d="M.5 6L5.500.8L10.500 6" fill="none" stroke="#c5c5c5" stroke-width="1.15"/></svg><svg style="left:885px;top:11.799999999999955px" width="10" height="10" viewBox="0 0 10 10" ><path d="M.4.4l9.200 9.200M9.600.4L.4 9.600" stroke="#c5c5c5" stroke-width="1.15"/></svg><span style="left:20.3px;font-size:14px;font-family:'Liberation Mono',monospace;color:#d0d0d0;letter-spacing:-1.430px;top:45px;height:18px;line-height:20px;">C:\Users\user\llmops-gha-demo\promptflow\web-classification&gt;pfazure run create --file run.yml</span><div class="abs" style="left:11px;top:36px;width:673px;height:36px;border:3px solid #ed1c24"></div><div class="abs" style="left:900px;top:46px;width:6px;height:16px;border:1px solid #2e2e2e;border-right:0"></div></div>
</body>
</html>
